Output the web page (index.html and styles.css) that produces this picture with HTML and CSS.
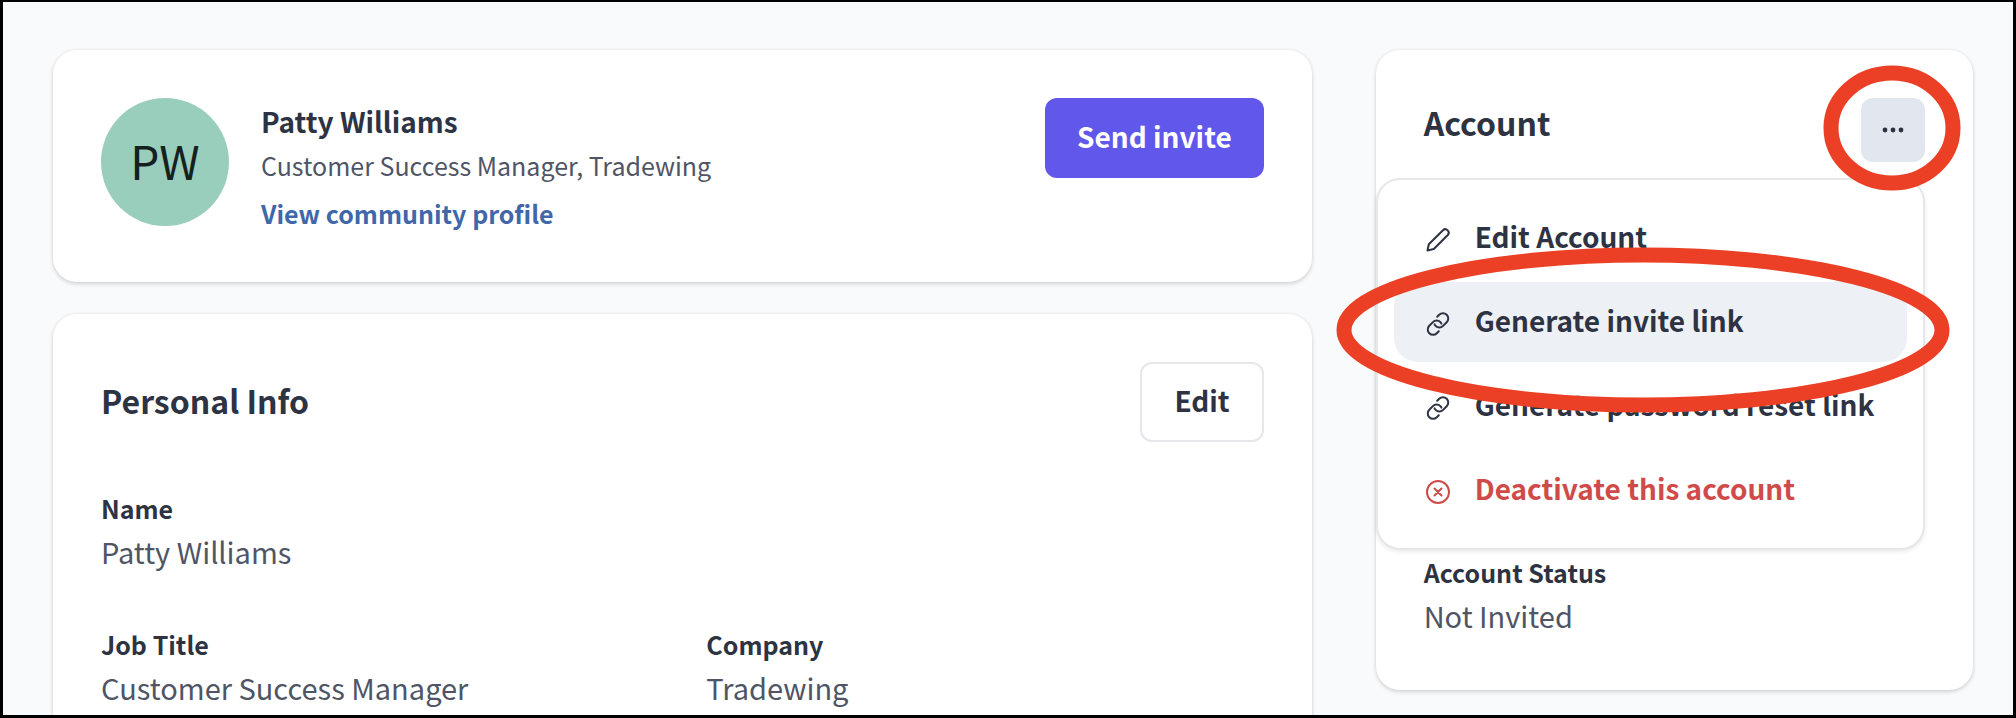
FILE: index.html
```html
<!DOCTYPE html>
<html lang="en">
<head>
    <meta charset="utf-8">
    <title>Patty Williams</title>
    <link rel="stylesheet" href="styles.css">
</head>
<body>
    <div class="page">
        <main class="main">
            <section class="card profile">
                <div class="avatar">PW</div>
                <div class="profile-text">
                    <h1>Patty Williams</h1>
                    <p>Customer Success Manager, Tradewing</p>
                    <a href="#">View community profile</a>
                </div>
                <button class="btn btn-primary">Send invite</button>
            </section>

            <section class="card">
                <div class="card-header">
                    <h2>Personal Info</h2>
                    <button class="btn btn-outline">Edit</button>
                </div>
                <dl class="fields">
                    <div class="field wide">
                        <dt>Name</dt>
                        <dd>Patty Williams</dd>
                    </div>
                    <div class="field">
                        <dt>Job Title</dt>
                        <dd>Customer Success Manager</dd>
                    </div>
                    <div class="field">
                        <dt>Company</dt>
                        <dd>Tradewing</dd>
                    </div>
                </dl>
            </section>
        </main>

        <aside class="card account">
            <div class="card-header">
                <h2>Account</h2>
                <button class="btn-more" aria-label="More actions">
                    <svg width="24" height="24" viewBox="0 0 24 24" fill="currentColor">
                        <circle cx="4" cy="12" r="2.4"/>
                        <circle cx="12" cy="12" r="2.4"/>
                        <circle cx="20" cy="12" r="2.4"/>
                    </svg>
                </button>
            </div>

            <div class="menu">
                <button class="menu-item">
                    <svg class="icon" viewBox="0 0 24 24">
                        <path d="M1.5 22.5l1.3-6.3L17 2.2a3.4 3.4 0 0 1 4.8 4.8L7.8 21z"/>
                    </svg>
                    Edit Account
                </button>
                <button class="menu-item active">
                    <svg class="icon" viewBox="0 0 24 24">
                        <path d="M11.2 4.8l2-2a5.3 5.3 0 0 1 7.5 0a5.3 5.3 0 0 1 0 7.5l-3.6 3.6a5.3 5.3 0 0 1-7.5 0a5 5 0 0 1-1-1.5"/>
                        <path d="M12.8 19.2l-2 2a5.3 5.3 0 0 1-7.5 0a5.3 5.3 0 0 1 0-7.5l3.6-3.6a5.3 5.3 0 0 1 7.5 0a5 5 0 0 1 1 1.5"/>
                    </svg>
                    Generate invite link
                </button>
                <button class="menu-item">
                    <svg class="icon" viewBox="0 0 24 24">
                        <path d="M11.2 4.8l2-2a5.3 5.3 0 0 1 7.5 0a5.3 5.3 0 0 1 0 7.5l-3.6 3.6a5.3 5.3 0 0 1-7.5 0a5 5 0 0 1-1-1.5"/>
                        <path d="M12.8 19.2l-2 2a5.3 5.3 0 0 1-7.5 0a5.3 5.3 0 0 1 0-7.5l3.6-3.6a5.3 5.3 0 0 1 7.5 0a5 5 0 0 1 1 1.5"/>
                    </svg>
                    Generate password reset link
                </button>
                <button class="menu-item danger">
                    <svg class="icon" viewBox="0 0 24 24">
                        <circle cx="12" cy="12" r="11"/>
                        <path d="M8.5 8.5l7 7M15.5 8.5l-7 7"/>
                    </svg>
                    Deactivate this account
                </button>
            </div>

            <dl class="status">
                <dt>Account Status</dt>
                <dd>Not Invited</dd>
            </dl>

            <!-- red callouts -->
            <svg class="callout callout-more" width="138" height="126" viewBox="0 0 138 126">
                <ellipse cx="69" cy="63" rx="61" ry="55"/>
            </svg>
            <svg class="callout callout-invite" width="616" height="166" viewBox="0 0 616 166">
                <ellipse cx="308" cy="83" rx="299" ry="75"/>
            </svg>
        </aside>
    </div>
</body>
</html>
```
FILE: styles.css
```css
* { box-sizing: border-box; }
body { margin: 0; font-family: "Noto Sans CJK SC", "Noto Sans", sans-serif; color: #2d3342; }
h1, h2, p, dl, dd { margin: 0; }
button { font: inherit; color: inherit; border: none; cursor: pointer; }

.page {
    display: grid;
    grid-template-columns: 59fr 28fr;
    align-items: start;
    gap: 64px;
    height: 100vh;
    padding: 48px 40px 0 50px;
    overflow: hidden;
    background: #f9fafc;
    border: solid #000;
    border-width: 2px 3px 3px 3px;
}
.main { display: grid; gap: 32px; }

.card { padding: 48px; background: #fff; border-radius: 24px; box-shadow: 0 2px 4px rgba(0, 0, 0, 0.14), 0 0 4px rgba(0, 0, 0, 0.06); }
.card-header { display: flex; justify-content: space-between; align-items: center; }
h2 { padding-bottom: 4px; font-size: 32px; line-height: 48px; font-weight: 700; }

.profile { display: flex; align-items: flex-start; gap: 32px; height: 232px; }
.avatar { display: flex; align-items: center; justify-content: center; width: 128px; height: 128px; padding-bottom: 4px; border-radius: 50%; background: #99cdbc; color: #14211f; font-size: 46px; line-height: 64px; }
.profile-text { flex: 1; }
.profile-text h1 { font-size: 28px; line-height: 46px; font-weight: 700; }
.profile-text p { font-size: 25px; line-height: 42px; color: #4f5565; }
.profile-text a { display: inline-block; font-size: 25px; line-height: 54px; color: #3f67a9; font-weight: 700; text-decoration: none; }

.btn { height: 80px; padding: 0 32px 4px; border-radius: 12px; font-size: 28px; font-weight: 700; }
.btn-primary { background: #6157ea; color: #fff; }
.btn-outline { background: #fff; border: 2px solid #e5e7eb; }

.fields { display: grid; grid-template-columns: 1fr 1fr; gap: 50px 48px; padding-top: 46px; }
.wide { grid-column: span 2; }
dt { font-size: 25px; line-height: 40px; font-weight: 700; }
dd { font-size: 29px; line-height: 46px; color: #4f5565; }

.account { position: relative; height: 640px; }
.account .card-header { align-items: flex-start; }
.btn-more { display: flex; align-items: center; justify-content: center; width: 64px; height: 64px; padding: 0; border-radius: 12px; background: #e2e6ee; }

.menu { position: absolute; top: 128px; left: 0; right: 48px; display: grid; gap: 4px; padding: 18px 16px; background: #fff; border: 2px solid #e5e7eb; border-radius: 24px; box-shadow: 0 2px 4px rgba(0, 0, 0, 0.08); }
.menu-item { display: flex; align-items: center; gap: 25px; height: 80px; padding: 0 32px 4px; border-radius: 24px; background: none; font-size: 28px; font-weight: 700; white-space: nowrap; }
.menu-item.active { background: #edf0f5; }
.menu-item.danger { color: #cf4b49; }
.icon { flex: none; width: 24px; height: 24px; margin-top: 8px; fill: none; stroke: currentColor; stroke-width: 2; stroke-linecap: round; stroke-linejoin: round; overflow: visible; }

.status { padding-top: 390px; }

.callout { position: absolute; fill: none; stroke: #eb4025; stroke-width: 15; pointer-events: none; }
.callout-more { top: 15px; right: 12px; }
.callout-invite { top: 197px; right: 22px; }
```
